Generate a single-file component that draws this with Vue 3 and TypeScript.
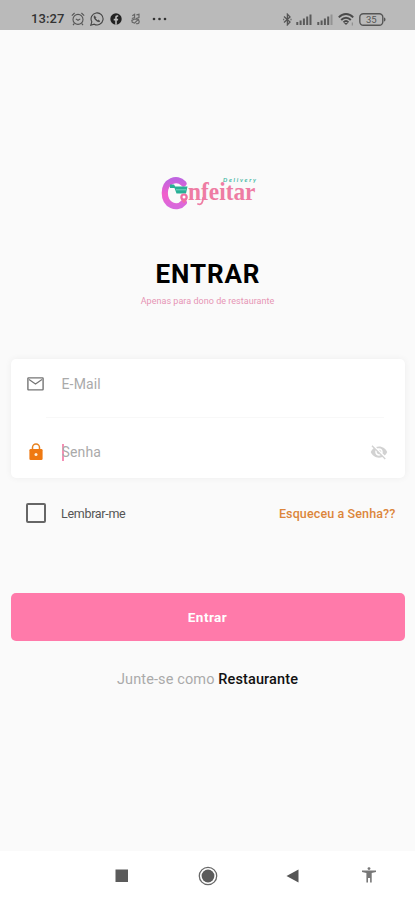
<script setup lang="ts">
import { ref } from 'vue'

const email = ref('')
const password = ref('')
const remember = ref(false)
const hidden = ref(true)
const bars = [3, 4.5, 6.5, 8.5, 10.5]
</script>

<template>
  <div class="screen">
    <header class="status">
      <span class="time">13:27</span>
      <svg class="alarm" viewBox="0 0 14 14" fill="none" stroke="#555" stroke-width="1.1">
        <circle cx="7" cy="7.4" r="5" />
        <path d="M.8 3.6 3.6 1M13.2 3.6 10.4 1M3.4 11.4 2 13.2M10.6 11.4 12 13.2M4.8 6.9 7 8.3l2.3-1.4" />
      </svg>
      <svg class="whats" viewBox="0 0 14 14" fill="none" stroke="#444" stroke-width="1.1">
        <path d="M.8 13.2 1.8 9.8A6 6 0 1 1 4.2 12.2Z" />
        <path d="M4.5 3.7c-.9.7-.6 2.5 1 4.2s3.6 2.4 4.5 1.3l-1.6-1.2-.9.6-2-2 .4-1Z" fill="#444" stroke-width=".5" />
      </svg>
      <svg class="face" viewBox="0 0 12 12">
        <circle cx="6" cy="6" r="5.7" fill="#222" />
        <path d="M5.2 11.8V7.4H3.7V5.7h1.5V4.5c0-1.7.9-2.5 3-2.2v1.5c-1.1 0-1.4.1-1.4.9v1h1.4L8 7.4H6.8v4.4Z" fill="#bbb" />
      </svg>
      <svg class="misc" viewBox="0 0 12 12" fill="none" stroke="#666" stroke-width="1.3">
        <path d="M2.500 2.500 5 1v3.500l-3 1M7 1.500 9.800.9v3.600L6.500 5.500M2 7.500l3-1.500 4 .5L5 10.500l-2.500-.8ZM9 7a2 2 0 1 1-2.500 3.800" />
      </svg>
      <svg class="dots" viewBox="0 0 15 4" fill="#333">
        <circle cx="2" cy="2" r="1.3" /><circle cx="7.5" cy="2" r="1.3" /><circle cx="13" cy="2" r="1.3" />
      </svg>
      <span class="grow"></span>
      <svg class="bt" viewBox="0 0 9 13" fill="none" stroke="#555" stroke-width="1.3">
        <path d="M1 3.5 7 9 4.4 11.8V1.2L7 3.900 1 9.5" /><path d="M.2 6.5h1M7.5 6.5h1" />
      </svg>
      <svg v-for="n in 2" :key="n" class="signal" viewBox="0 0 16 11" fill="#5a5a5a">
        <rect v-for="(h, i) in bars" :key="i" :x="i * 3.3 + .3" :y="11 - h" width="2" :height="h" :opacity="n === 2 && i === 4 ? .4 : 1" />
      </svg>
      <svg class="wifi" viewBox="0 0 17 13" fill="none" stroke="#4a4a4a" stroke-width="1.9">
        <path d="M.8 4.4C5-.1 11-.1 15.2 4.4M3.2 7C6 4 10 4 12.8 7M5.5 9.3c1.6-1.6 3.4-1.600 5 0" />
        <path d="m8 12 2-2H6Z" fill="#4a4a4a" stroke="none" /><path d="M14.3 9.5v3" stroke="#888" stroke-width="1" />
      </svg>
      <svg class="battery" viewBox="0 0 27 13">
        <rect x=".8" y=".8" width="23" height="11.4" rx="3.5" fill="none" stroke="#555" stroke-width="1.4" />
        <path d="M25 4.500c2 .5 2 3.500 0 4Z" fill="#555" />
        <text x="12.300" y="9.900" text-anchor="middle" font-family="Roboto, sans-serif" font-size="9.500" fill="#555">35</text>
      </svg>
    </header>

    <main class="content">
      <svg class="logo" viewBox="0 0 98 38" role="img" aria-label="Confeitar Delivery">
        <defs>
          <linearGradient id="brand" x1="0" y1="0" x2="0" y2="1">
            <stop offset="0" stop-color="#c064e0" /><stop offset=".55" stop-color="#f25fcb" /><stop offset="1" stop-color="#d868dc" />
          </linearGradient>
        </defs>
        <path d="M23.500 11.500C17 4.500 4.800 9 4.800 21s12.200 17.500 19 9.500" fill="none" stroke="url(#brand)" stroke-width="6.200" stroke-linecap="round" />
        <path d="M10 12.500h4l1.200 2H27.500L26 21.500H16.500L14.500 16H10Z" fill="#28b096" />
        <path d="M16 17.800h10" stroke="#8adccd" stroke-width=".8" />
        <path d="M24 31.500c-2-2.500-3.800-4-3.800-6.300a3.800 3.800 0 0 1 7.600 0c0 2.300-1.800 3.800-3.800 6.300Z" fill="#ef6ea3" />
        <circle cx="24" cy="25" r="1.500" fill="#fff" />
        <text x="28" y="27.500" font-family="'Liberation Serif', serif" font-size="26" font-weight="700" fill="#ee7ca3" textLength="67.500" lengthAdjust="spacingAndGlyphs">nfeitar</text>
        <path d="M43 26c0 4-1.500 7.500-5 6" fill="none" stroke="#ee7ca3" stroke-width="1.800" stroke-linecap="round" />
        <text x="63" y="9.500" font-family="Lato, sans-serif" font-size="6" font-style="italic" font-weight="700" fill="#45b8a4" textLength="33">Delivery</text>
      </svg>

      <h1>ENTRAR</h1>
      <p class="subtitle"><span>Apenas para dono de restaurante</span></p>

      <form class="form" @submit.prevent>
        <div class="card">
          <label class="field">
            <svg class="mail" viewBox="0 0 17 14" fill="none" stroke="#757575" stroke-width="1.4">
              <rect x=".9" y=".9" width="15.2" height="12" rx=".6" /><path d="m2 2.500 6.500 4.500L15 2.500" stroke-width="1.200" />
            </svg>
            <input v-model="email" type="text" placeholder="E-Mail" aria-label="E-Mail" />
          </label>
          <div class="divider"></div>
          <label class="field">
            <svg class="lock" viewBox="0 0 14 18">
              <path d="M3.5 7V4.5a3.5 3.5 0 0 1 7 0V7" fill="none" stroke="#e8821e" stroke-width="1.5" />
              <rect x=".4" y="6" width="13.2" height="11" rx="1.3" fill="#ef7911" />
              <circle cx="7" cy="11.5" r="1.5" fill="#fff0dc" />
            </svg>
            <span class="caret"></span>
            <input v-model="password" :type="hidden ? 'password' : 'text'" placeholder="Senha" aria-label="Senha" />
            <svg class="eye" viewBox="0 0 24 24" fill="#d2d2d2" @click.prevent="hidden = !hidden">
              <path d="M12 7c2.760 0 5 2.240 5 5 0 .65-.13 1.260-.36 1.830l2.920 2.920c1.510-1.260 2.700-2.890 3.430-4.750-1.730-4.390-6-7.500-11-7.500-1.400 0-2.740.25-3.980.7l2.160 2.160C10.740 7.130 11.350 7 12 7zM2 4.270l2.280 2.280.46.46C3.080 8.300 1.780 10.020 1 12c1.730 4.390 6 7.500 11 7.500 1.550 0 3.030-.3 4.380-.84l.42.42L19.730 22 21 20.730 3.270 3 2 4.270zM7.530 9.800l1.550 1.550c-.05.21-.08.43-.08.65 0 1.660 1.340 3 3 3 .22 0 .44-.03.65-.08l1.550 1.550c-.67.33-1.410.53-2.200.53-2.760 0-5-2.240-5-5 0-.79.2-1.530.53-2.200zm4.310-.78 3.150 3.150.02-.16c0-1.660-1.340-3-3-3l-.17.01z" />
            </svg>
          </label>
        </div>

        <div class="options">
          <label class="remember"><input v-model="remember" type="checkbox" /><span>Lembrar-me</span></label>
          <a class="forgot">Esqueceu a Senha??</a>
        </div>

        <button class="submit" type="submit"><span>Entrar</span></button>
      </form>

      <p class="join"><span class="lead">Junte-se como</span> <a>Restaurante</a></p>
    </main>

    <nav class="nav">
      <svg viewBox="0 0 20 20"><rect x="3.500" y="3.500" width="12.500" height="12.500" fill="#5b5b5b" /></svg>
      <svg viewBox="0 0 20 20"><circle cx="10" cy="10" r="8.700" fill="none" stroke="#686868" stroke-width="1.300" /><circle cx="10" cy="10" r="6.400" fill="#5b5b5b" /></svg>
      <svg viewBox="0 0 20 20"><path d="M3.500 10 15.500 3.500v13Z" fill="#555" /></svg>
      <svg viewBox="0 0 20 20" fill="#777"><circle cx="10" cy="2.600" r="1.400" /><path d="M3 4.600h14v1.500l-4.300.8v9.600h-1.600V12H9v4.500H7.400V6.900L3 6.100Z" /></svg>
    </nav>
  </div>
</template>

<style>
body { background: #fafafa; }
</style>

<style scoped>
* { box-sizing: border-box; }
.screen { width: 415px; height: 900px; display: flex; flex-direction: column; overflow: hidden; background: #fafafa; font-family: Roboto, sans-serif; }
.status { height: 30px; flex: none; display: flex; align-items: center; padding: 8px 29px 0 31px; background: #bababa; color: #333; }
.status svg { flex: none; }
.time { width: 40px; font-size: 13px; font-weight: 500; line-height: 16px; letter-spacing: .1px; }
.alarm { width: 14px; height: 14px; margin-right: 5px; }
.whats { width: 14px; height: 14px; margin-right: 6px; }
.face { width: 12px; height: 12px; margin-right: 8px; }
.misc { width: 11px; height: 12px; margin-right: 11px; }
.dots { width: 15px; height: 4px; }
.grow { flex: 1; }
.bt { width: 9px; height: 13px; margin-right: 4px; }
.signal { width: 16px; height: 11px; margin-right: 5px; }
.wifi { width: 17px; height: 13px; margin-right: 4px; }
.battery { width: 27px; height: 13px; }
.content { flex: 1; display: flex; flex-direction: column; padding: 142px 10.5px 0; }
.logo { width: 98px; height: 38px; margin-left: 149px; display: block; overflow: visible; }
h1 { margin: 48px 0 0; text-align: center; font-size: 26px; line-height: 32px; font-weight: 700; letter-spacing: .9px; text-indent: .9px; color: #000; }
.subtitle { margin: 5px 0 0; text-align: center; font-size: 9px; line-height: 12px; letter-spacing: .03px; color: #e695b5; }
.form { margin-top: 52px; }
.card { height: 119px; padding: 0 17px 0 16px; border-radius: 5px; background: #fff; box-shadow: 0 0 7px rgba(0, 0, 0, .055); }
.field { height: 50px; display: flex; align-items: center; }
.divider + .field { height: 68px; }
.divider { height: 1px; margin: 8px 4px 0 19px; background: #f8f8f8; }
.field input { flex: 1; min-width: 0; padding: 0; border: 0; outline: 0; background: transparent; font: 400 14px/20px Roboto, sans-serif; letter-spacing: .15px; }
.field input::placeholder { color: #aaa; opacity: 1; }
.mail { width: 17px; height: 14px; margin: 0 17.500px 0 .5px; }
.lock { width: 14px; height: 18px; margin: 0 18.500px 0 2.500px; }
.caret { flex: none; width: 2px; height: 17px; margin-right: -2px; background: #f48fb5; }
.eye { width: 18px; height: 18px; }
.options { height: 20px; margin-top: 25px; padding: 0 9px 0 15.500px; display: flex; align-items: center; justify-content: space-between; font-size: 12.500px; }
.remember { display: flex; align-items: center; gap: 15px; color: #555; letter-spacing: -.3px; }
.remember input { appearance: none; width: 20px; height: 20px; margin: 0; border: 2px solid #666; border-radius: 2px; }
.forgot { color: #dc863a; font-weight: 500; letter-spacing: .12px; }
.submit { display: block; width: 100%; height: 48px; margin-top: 70px; padding: 0; border: 0; border-radius: 5px; background: #ff7aaa; color: #fff; font: 700 13.500px/20px Roboto, sans-serif; letter-spacing: .45px; }
.join { margin: 28.500px 0 0; text-align: center; font-size: 14.500px; line-height: 20px; letter-spacing: .12px; color: #111; }
.join .lead { color: #aaa; }
.join a { font-weight: 500; }
.nav { height: 49px; flex: none; display: flex; align-items: center; padding: 0 36px 0 112px; gap: 65px; background: #fff; }
.nav svg { flex: none; width: 20px; height: 20px; }
.nav svg:nth-child(2) { margin-left: 1px; }
.nav svg:nth-child(4) { margin-left: -9px; }
</style>
